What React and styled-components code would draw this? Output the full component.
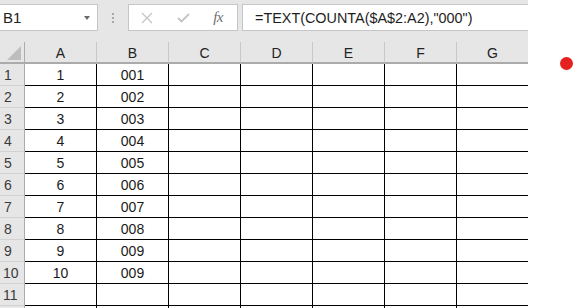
import React from "react";
import styled, { createGlobalStyle } from "styled-components";

const Global = createGlobalStyle`
  html, body { margin: 0; padding: 0; background: #fff; overflow: hidden; }
  body { font-family: "Liberation Sans", Arial, sans-serif; }
`;

const Page = styled.div`
  display: flex;
  width: 575px;
  height: 308px;
  overflow: hidden;
`;

const Sheet = styled.div`
  width: 528px;
  display: flex;
  flex-direction: column;
  background: #e6e6e6;
  overflow: hidden;
`;

const Toolbar = styled.div`
  flex-shrink: 0;
  height: 42px;
  box-sizing: border-box;
  padding-top: 4px;
  display: flex;
  align-items: flex-start;
`;

const Box = styled.div`
  height: 27px;
  box-sizing: border-box;
  background: #fff;
  border: 1px solid #c6c6c6;
  display: flex;
  align-items: center;
`;

const NameBox = styled(Box)`
  width: 98px;
  border-left: none;
  padding-left: 3px;
  justify-content: space-between;
  font-size: 15px;
  color: #222;
`;

const Caret = styled.span`
  width: 0;
  height: 0;
  margin-right: 7px;
  border-left: 3.5px solid transparent;
  border-right: 3.5px solid transparent;
  border-top: 4px solid #6b6b6b;
`;

const Grip = styled.div`
  width: 30px;
  height: 27px;
  display: flex;
  flex-direction: column;
  align-items: center;
  justify-content: center;
  gap: 2px;
`;

const GripDot = styled.span`
  width: 2px;
  height: 2px;
  background: #a8a8a8;
`;

const FnBox = styled(Box)`
  width: 110px;
  padding: 0 14px 0 12px;
  justify-content: space-between;
`;

const Fx = styled.span`
  font-family: "Liberation Serif", "Times New Roman", serif;
  font-style: italic;
  font-size: 15px;
  color: #6f6f6f;
  letter-spacing: -0.5px;
`;

const FormulaBox = styled(Box)`
  margin-left: 4px;
  flex: 1;
  border-right: none;
  padding-left: 12px;
  font-size: 14.4px;
  color: #1e1e1e;
  white-space: nowrap;
`;

const Grid = styled.div`
  flex-shrink: 0;
  display: grid;
  grid-template-columns: 25px repeat(6, 72px) 71px;
  grid-auto-rows: 22px;
  background: #fff;
`;

const Corner = styled.div`
  background: #e6e6e6;
  border-right: 1px solid #ababab;
  border-bottom: 2px solid #ababab;
  box-sizing: border-box;
  display: flex;
  align-items: flex-end;
  justify-content: flex-end;
  padding: 0 3px 2px 0;
`;

const ColHead = styled.div`
  background: #e6e6e6;
  border-right: ${(p) => (p.last ? "none" : "1px solid #c9c9c9")};
  border-bottom: 2px solid #ababab;
  box-sizing: border-box;
  display: flex;
  align-items: center;
  justify-content: center;
  font-size: 14px;
  color: #222;
  padding-top: 2px;
`;

const RowHead = styled.div`
  background: #e6e6e6;
  border-right: 1px solid #ababab;
  border-bottom: 1px solid #d2d2d2;
  box-sizing: border-box;
  display: flex;
  align-items: center;
  padding-left: ${(p) => (p.wide ? "3px" : "4px")};
  font-size: 14px;
  color: #3a3a3a;
`;

const Cell = styled.div`
  border-right: ${(p) => (p.last ? "none" : "1px solid #000")};
  border-bottom: 1px solid #000;
  box-sizing: border-box;
  display: flex;
  align-items: center;
  justify-content: center;
  font-size: 14px;
  color: #1a1a1a;
`;

const Side = styled.div`
  flex: 1;
  display: flex;
  justify-content: flex-end;
  align-items: flex-start;
  padding: 57px 2px 0 0;
`;

const Dot = styled.span`
  width: 13px;
  height: 13px;
  border-radius: 50%;
  background: #e6201f;
`;

const cols = ["A", "B", "C", "D", "E", "F", "G"];
const rows = [
  ["1", "001"], ["2", "002"], ["3", "003"], ["4", "004"], ["5", "005"],
  ["6", "006"], ["7", "007"], ["8", "008"], ["9", "009"], ["10", "009"],
  ["", ""], ["", ""],
];

export default function App() {
  return (
    <Page>
      <Global />
      <Sheet>
        <Toolbar>
          <NameBox>
            B1
            <Caret />
          </NameBox>
          <Grip>
            <GripDot />
            <GripDot />
            <GripDot />
          </Grip>
          <FnBox>
            <svg width="12" height="12" viewBox="0 0 12 12">
              <path d="M1 1 L11 11 M11 1 L1 11" stroke="#c4c4c4" strokeWidth="1.3" fill="none" />
            </svg>
            <svg width="13" height="10" viewBox="0 0 13 10">
              <path d="M1 5 L4.5 8.5 L12 1" stroke="#c4c4c4" strokeWidth="1.8" fill="none" />
            </svg>
            <Fx>fx</Fx>
          </FnBox>
          <FormulaBox>=TEXT(COUNTA($A$2:A2),"000")</FormulaBox>
        </Toolbar>
        <Grid>
          <Corner>
            <svg width="14" height="14" viewBox="0 0 14 14">
              <path d="M14 0 L14 14 L0 14 Z" fill="#bdbdbd" />
            </svg>
          </Corner>
          {cols.map((c, i) => (
            <ColHead key={c} last={i === cols.length - 1}>{c}</ColHead>
          ))}
          {rows.map((r, i) => (
            <React.Fragment key={i}>
              <RowHead wide={i + 1 >= 10}>{i < 11 ? i + 1 : ""}</RowHead>
              {cols.map((c, j) => (
                <Cell key={c} last={j === cols.length - 1}>
                  {j < 2 ? r[j] : ""}
                </Cell>
              ))}
            </React.Fragment>
          ))}
        </Grid>
      </Sheet>
      <Side>
        <Dot />
      </Side>
    </Page>
  );
}
